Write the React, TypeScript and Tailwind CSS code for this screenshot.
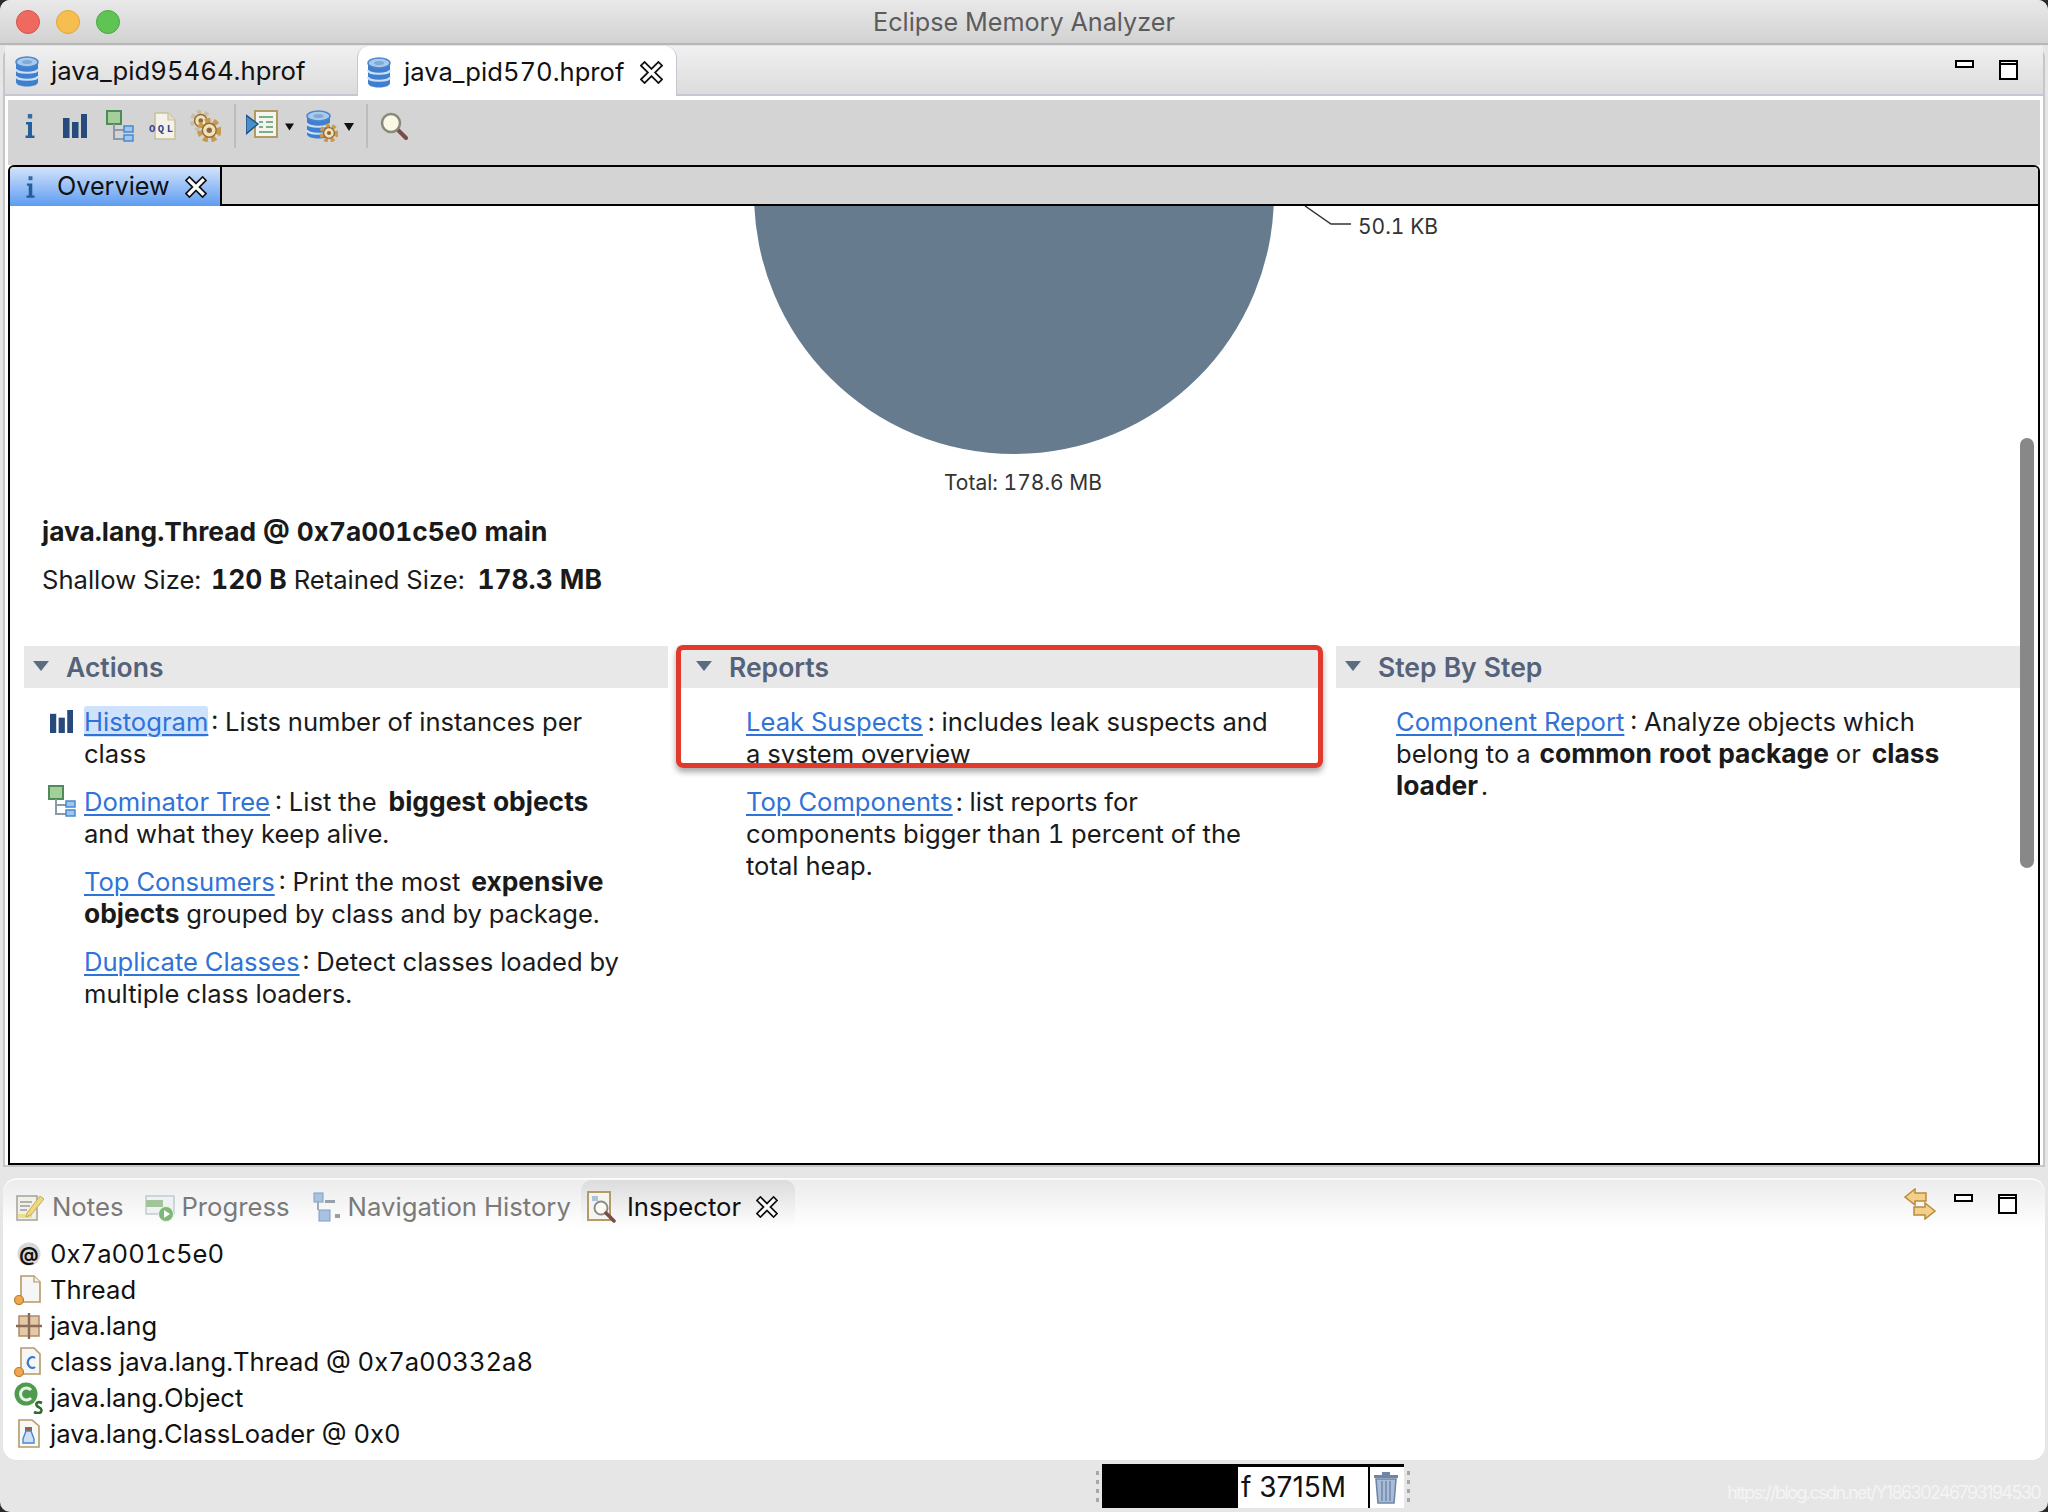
import { ReactNode } from "react";

const CloseIcon = ({ className = "" }: { className?: string }) => (
  <svg viewBox="0 0 20 20" className={className}>
    <path d="M4 4 L16 16 M16 4 L4 16" stroke="#111" strokeWidth="6" strokeLinecap="square" />
    <path d="M4 4 L16 16 M16 4 L4 16" stroke="#fff" strokeWidth="3" strokeLinecap="square" />
  </svg>
);

const DbIcon = ({ className = "" }: { className?: string }) => (
  <svg viewBox="0 0 26 32" className={className}>
    <path d="M2 6 V26 C2 32 24 32 24 26 V6 Z" fill="#3f7fd0" />
    <ellipse cx="13" cy="6" rx="11" ry="5" fill="#a9c9ea" stroke="#4a86cf" strokeWidth="1.5" />
    <ellipse cx="13" cy="6" rx="5" ry="2" fill="#7fa9d8" />
    <path d="M2 13 C2 18 24 18 24 13 M2 20 C2 25 24 25 24 20" fill="none" stroke="#cfe0f4" strokeWidth="2.2" />
  </svg>
);

const InfoIcon = ({ className = "" }: { className?: string }) => (
  <svg viewBox="0 0 10 24" className={className}>
    <rect x="2.8" y="0" width="4.4" height="4.5" fill="#2f6fa8" />
    <path d="M1 8 H7 V21.5 H9.5 V24 H0.5 V21.5 H3 V10.5 H1 Z" fill="#245f99" />
  </svg>
);

const BarsIcon = ({ className = "" }: { className?: string }) => (
  <svg viewBox="0 0 24 24" className={className}>
    <rect x="0" y="4" width="6.5" height="20" fill="#264a7c" />
    <rect x="9" y="8" width="6.5" height="16" fill="#264a7c" />
    <rect x="18" y="0" width="6" height="24" fill="#264a7c" />
  </svg>
);

const TreeIcon = ({ className = "" }: { className?: string }) => (
  <svg viewBox="0 0 28 32" className={className}>
    <rect x="1" y="1" width="14" height="13" fill="#a5cf9a" stroke="#4e8a5a" strokeWidth="2" />
    <path d="M8 14 V29 H18 M8 20 H18" fill="none" stroke="#8c99a8" strokeWidth="2" />
    <rect x="18" y="16" width="9" height="6" fill="#9cc8ee" stroke="#4a86cf" strokeWidth="1.5" />
    <rect x="18" y="25" width="9" height="6" fill="#9cc8ee" stroke="#4a86cf" strokeWidth="1.5" />
  </svg>
);

const OqlIcon = ({ className = "" }: { className?: string }) => (
  <svg viewBox="0 0 28 28" className={className}>
    <path d="M6 1 H19 L26 8 V27 H6 Z" fill="#f4f3ea" stroke="#c9c0a0" strokeWidth="1.6" />
    <path d="M19 1 V8 H26" fill="#e6dfc0" stroke="#c9c0a0" strokeWidth="1.2" />
    <text x="0" y="20" fontSize="10.5" fontWeight="700" fontFamily="'Liberation Mono', monospace" fill="#34408a" textLength="24">OQL</text>
  </svg>
);

const Gear = ({ cx, cy, r, fill = "#c99a4e" }: { cx: number; cy: number; r: number; fill?: string }) => (
  <g>
    <circle cx={cx} cy={cy} r={r} fill="none" stroke={fill} strokeWidth={r * 0.55} strokeDasharray={`${r * 0.5} ${r * 0.35}`} />
    <circle cx={cx} cy={cy} r={r * 0.72} fill="#f0e2bd" stroke="#9a6c2c" strokeWidth="1.4" />
    <circle cx={cx} cy={cy} r={r * 0.28} fill="#8a6a3c" />
  </g>
);

const GearsIcon = ({ className = "" }: { className?: string }) => (
  <svg viewBox="0 0 30 30" className={className}>
    <Gear cx={11} cy={10} r={8} fill="#c9bfa8" />
    <Gear cx={19} cy={19} r={9} />
  </svg>
);

const RunIcon = ({ className = "" }: { className?: string }) => (
  <svg viewBox="0 0 32 28" className={className}>
    <rect x="9" y="1" width="22" height="26" fill="#f3f5ee" stroke="#b09a66" strokeWidth="2" />
    <path d="M13 7 h14 M13 12 h4 m3 0 h7 M13 17 h4 m3 0 h7 M13 22 h14" stroke="#7cb08a" strokeWidth="2" />
    <path d="M0 5 L12 14 L0 24 Z" fill="#4a90c8" stroke="#1f4f86" strokeWidth="1.4" />
  </svg>
);

const DbGearIcon = ({ className = "" }: { className?: string }) => (
  <svg viewBox="0 0 32 32" className={className}>
    <path d="M1 6 V24 C1 30 24 30 24 24 V6 Z" fill="#3f7fd0" />
    <ellipse cx="12.5" cy="6" rx="11.5" ry="5" fill="#a9c9ea" stroke="#4a86cf" strokeWidth="1.5" />
    <ellipse cx="12.5" cy="6" rx="5" ry="2" fill="#7fa9d8" />
    <path d="M1 13 C1 18 24 18 24 13 M1 20 C1 25 24 25 24 20" fill="none" stroke="#cfe0f4" strokeWidth="2.2" />
    <Gear cx={23} cy={23} r={7.5} />
  </svg>
);

const SearchIcon = ({ className = "" }: { className?: string }) => (
  <svg viewBox="0 0 28 28" className={className}>
    <path d="M17 17 L26 26" stroke="#7d4a4a" strokeWidth="4" strokeLinecap="round" />
    <circle cx="11" cy="11" r="9" fill="#fbf8e6" stroke="#8a8a7a" strokeWidth="2.5" />
  </svg>
);

const Drop = ({ className = "" }: { className?: string }) => (
  <svg viewBox="0 0 10 8" className={className}>
    <path d="M0 0 H10 L5 8 Z" fill="#111" />
  </svg>
);

const MinMax = () => (
  <div className="flex items-start gap-[25px]">
    <div className="w-[19px] h-[8px] border-2 border-black bg-white" />
    <div className="w-[19px] h-[20px] border-2 border-black bg-white">
      <div className="h-[3px] border-b-2 border-black" />
    </div>
  </div>
);

const ToolSep = () => <div className="w-[2px] h-[44px] bg-[#bdbdbd]" />;

const NotesIcon = () => (
  <svg viewBox="0 0 28 28" className="w-[28px] h-[28px]">
    <rect x="1" y="3" width="20" height="24" fill="#f1f1ea" stroke="#a8a8a0" strokeWidth="1.6" />
    <path d="M4 9 h12 M4 13 h10 M4 17 h7" stroke="#9a9a9a" strokeWidth="1.6" />
    <rect x="2" y="21" width="14" height="4" fill="#eede90" />
    <path d="M11 20 L24 3 L28 6 L15 22 L10 24 Z" fill="#efd77c" stroke="#c2ad5c" strokeWidth="1" />
  </svg>
);

const ProgressIcon = () => (
  <svg viewBox="0 0 30 30" className="w-[30px] h-[30px]">
    <rect x="1" y="4" width="28" height="18" fill="#eef2f2" stroke="#b6c0c6" strokeWidth="1.2" />
    <rect x="1" y="8" width="17" height="7" fill="#a3c49b" />
    <circle cx="21" cy="22" r="7.5" fill="#7db77a" stroke="#e8f4e4" strokeWidth="1" />
    <path d="M19 18 L25 22 L19 26 Z" fill="#fff" />
  </svg>
);

const NavIcon = () => (
  <svg viewBox="0 0 28 30" className="w-[28px] h-[30px]">
    <rect x="1" y="1" width="9" height="9" fill="#a9c2e2" stroke="#7f9cc6" strokeWidth="1" />
    <rect x="12" y="8" width="10" height="3" fill="#9aa0a8" />
    <rect x="6" y="18" width="11" height="11" fill="#a9c2e2" stroke="#7f9cc6" strokeWidth="1" />
    <rect x="22" y="22" width="5" height="4" fill="#9aa0a8" />
    <path d="M5 10 V18" stroke="#a0a8b4" strokeWidth="2" />
  </svg>
);

const InspectorIcon = () => (
  <svg viewBox="0 0 30 32" className="w-[30px] h-[32px]">
    <rect x="1" y="1" width="22" height="28" fill="#f5f5f0" stroke="#b49a66" strokeWidth="2" />
    <rect x="5" y="5" width="6" height="5" fill="#a9c2e2" />
    <circle cx="14" cy="17" r="6.5" fill="#fbfbf2" stroke="#8a8a8a" strokeWidth="2" />
    <path d="M19 22 L27 30" stroke="#7d4a4a" strokeWidth="3.5" strokeLinecap="round" />
  </svg>
);

const OrangeDot = () => <circle cx="5" cy="21" r="4.5" fill="#f0a850" stroke="#c07a2a" strokeWidth="1.2" />;

const AtIcon = () => (
  <svg viewBox="0 0 24 26" className="w-[24px] h-[26px] ml-[3px]">
    <circle cx="12" cy="13" r="11.5" fill="#d8d8d8" />
    <text x="12" y="19.5" textAnchor="middle" fontSize="19" fontWeight="700" fontFamily="Inter, sans-serif" fill="#111">@</text>
  </svg>
);

const FileIcon = () => (
  <svg viewBox="0 0 28 30" className="w-[28px] h-[30px]">
    <path d="M7 1 H20 L26 7 V27 H7 Z" fill="#f6f6f6" stroke="#b49a66" strokeWidth="1.6" />
    <path d="M20 1 V7 H26" fill="#eee" stroke="#b49a66" strokeWidth="1.2" />
    <g transform="translate(0 4)"><OrangeDot /></g>
  </svg>
);

const PackageIcon = () => (
  <svg viewBox="0 0 26 26" className="w-[26px] h-[26px] ml-[2px]">
    <rect x="3" y="3" width="20" height="20" fill="#e4c8a8" stroke="#b08a68" strokeWidth="1.5" />
    <path d="M13 0 V26 M0 13 H26" stroke="#8a6a58" strokeWidth="2.4" />
  </svg>
);

const ClassFileIcon = () => (
  <svg viewBox="0 0 28 30" className="w-[28px] h-[30px]">
    <path d="M7 1 H20 L26 7 V27 H7 Z" fill="#f6f6f6" stroke="#b49a66" strokeWidth="1.6" />
    <path d="M21 11 A4.5 5.5 0 1 0 21 20" fill="none" stroke="#3f78c4" strokeWidth="2.2" />
    <g transform="translate(0 4)"><OrangeDot /></g>
  </svg>
);

const GreenClassIcon = () => (
  <svg viewBox="0 0 32 32" className="w-[32px] h-[32px]">
    <circle cx="12" cy="12" r="11.5" fill="#4f9a4e" />
    <path d="M17 8 A6 6 0 1 0 17 16" fill="none" stroke="#e8f4e4" strokeWidth="3" />
    <path d="M28 21 C24 19 21 21 23 24 C25 26 29 26 27 30 C25 32 22 31 20 30" fill="none" stroke="#2f6b2e" strokeWidth="2.6" />
  </svg>
);

const LoaderIcon = () => (
  <svg viewBox="0 0 24 30" className="w-[24px] h-[30px] ml-[3px]">
    <path d="M2 1 H15 L22 7 V28 H2 Z" fill="#f8f8f4" stroke="#b49a66" strokeWidth="1.6" />
    <rect x="8" y="8" width="7" height="4" fill="#a85a3a" />
    <path d="M9 12 H14 L17 20 V24 H6 V20 Z" fill="#cfe0f4" stroke="#4a86cf" strokeWidth="1.4" />
  </svg>
);

const TrashIcon = () => (
  <svg viewBox="0 0 24 32" className="w-[24px] h-[32px]">
    <rect x="8" y="0" width="8" height="3" fill="#6f86a8" />
    <rect x="0" y="3" width="24" height="3" fill="#6f86a8" />
    <path d="M2 7 H22 L20 31 H4 Z" fill="#a9bcd8" stroke="#6f86a8" strokeWidth="1.6" />
    <path d="M8 9 V29 M12 9 V29 M16 9 V29" stroke="#6f86a8" strokeWidth="1.4" />
  </svg>
);

const Grip = () => (
  <div className="flex flex-col gap-[5px]">
    <div className="w-[3px] h-[4px] bg-[#a8a8a8]" />
    <div className="w-[3px] h-[4px] bg-[#a8a8a8]" />
    <div className="w-[3px] h-[4px] bg-[#a8a8a8]" />
    <div className="w-[3px] h-[4px] bg-[#a8a8a8]" />
  </div>
);

const Link = ({ children }: { children: ReactNode }) => (
  <a className="text-[#2f72d8] underline underline-offset-[3px] decoration-[1.5px]">{children}</a>
);

const Strong = ({ children, className = "" }: { children: ReactNode; className?: string }) => (
  <b className={`text-[26.4px] leading-[0] font-bold ${className}`}>{children}</b>
);

const SectionHead = ({ title, indent }: { title: string; indent: string }) => (
  <div className={`h-[42px] bg-[#e8e8e8] flex items-center gap-[17px] ${indent}`}>
    <svg viewBox="0 0 16 10" className="w-[16px] h-[10px] -mt-[2px]">
      <path d="M0 0 H16 L8 10 Z" fill="#5a6b82" />
    </svg>
    <span className="text-[26.5px] font-semibold text-[#54627a] leading-none">{title}</span>
  </div>
);

const InspectorRow = ({ icon, text }: { icon: ReactNode; text: string }) => (
  <div className="h-[36px] flex items-center">
    <div className="w-[36px] ml-[11px] flex items-center">{icon}</div>
    <span>{text}</span>
  </div>
);

export default function App() {
  return (
    <div className="w-[2048px] h-[1512px] bg-[#2a2a2a] overflow-hidden font-['Inter',sans-serif] tabular-nums">
      <div className="h-full rounded-[10px] bg-[#e6e6e6] flex flex-col overflow-hidden">
        {/* Title bar */}
        <div className="h-[45px] shrink-0 flex items-center justify-center relative pt-[3px] border-b-2 border-[#b6b6b6] bg-gradient-to-b from-[#e9e9e9] to-[#d2d2d2]">
          <div className="absolute left-[16px] top-[10px] flex gap-[16px]">
            <div className="w-[24px] h-[24px] rounded-full bg-[#ee6a5f] border border-[#d9534a]" />
            <div className="w-[24px] h-[24px] rounded-full bg-[#f6bd4f] border border-[#dfa63a]" />
            <div className="w-[24px] h-[24px] rounded-full bg-[#5fc454] border border-[#4aa83f]" />
          </div>
          <span className="text-[25.2px] text-[#5c5c5c]">Eclipse Memory Analyzer</span>
        </div>

        {/* Editor area */}
        <div className="h-[1121px] shrink-0 mx-[3px] mt-[1px] flex flex-col rounded-t-[12px] border-x-2 border-b-2 border-[#c6c6c6] bg-white">
          <div className="h-[50px] shrink-0 flex items-end border-b-2 border-[#c5c6d4] bg-gradient-to-b from-[#f0f0f0] to-[#dcdcdc] relative">
            <div className="h-full w-[352px] flex items-center pl-[9px] pt-[3px] gap-[11px] text-[25.7px] text-[#111]">
              <DbIcon className="w-[26px] h-[32px]" />
              <span>java_pid95464.hprof</span>
            </div>
            <div className="h-[50px] w-[320px] -mb-[2px] flex items-center pl-[8px] pt-[3px] gap-[12px] text-[25.6px] text-[#111] bg-white rounded-t-[12px] border-x border-[#c5c6d4]">
              <DbIcon className="w-[26px] h-[32px]" />
              <span>java_pid570.hprof</span>
              <CloseIcon className="w-[23px] h-[23px] ml-[4px]" />
            </div>
            <div className="absolute right-[25px] top-[14px]">
              <MinMax />
            </div>
          </div>

          <div className="flex-1 flex flex-col pt-[4px] px-[3px] min-h-0">
            {/* Toolbar */}
            <div className="h-[65px] shrink-0 bg-[#d4d4d4] flex items-start pt-[10px] pl-[17px]">
              <InfoIcon className="w-[10px] h-[24px] mt-[4px]" />
              <BarsIcon className="w-[24px] h-[24px] ml-[28px] mt-[4px]" />
              <TreeIcon className="w-[28px] h-[32px] ml-[19px]" />
              <OqlIcon className="w-[28px] h-[28px] ml-[15px] mt-[2px]" />
              <GearsIcon className="w-[32px] h-[32px] ml-[12px]" />
              <div className="ml-[13px] -mt-[6px]"><ToolSep /></div>
              <RunIcon className="w-[32px] h-[28px] ml-[10px]" />
              <Drop className="w-[9px] h-[8px] ml-[7px] mt-[13px]" />
              <DbGearIcon className="w-[32px] h-[32px] ml-[12px]" />
              <Drop className="w-[10px] h-[8px] ml-[6px] mt-[13px]" />
              <div className="ml-[12px] -mt-[6px]"><ToolSep /></div>
              <SearchIcon className="w-[28px] h-[28px] ml-[12px] mt-[2px]" />
            </div>

            {/* Overview folder */}
            <div className="flex-1 flex flex-col border-2 border-black rounded-t-[6px] min-h-0 overflow-hidden">
              <div className="h-[39px] shrink-0 bg-[#d4d4d4] border-b-2 border-black flex">
                <div className="w-[212px] h-[39px] flex items-center pl-[16px] rounded-tl-[6px] border-r-2 border-black bg-gradient-to-b from-[#d3e3fb] to-[#5c9cf0] text-[25.2px] text-[#111]">
                  <InfoIcon className="w-[9px] h-[22px]" />
                  <span className="ml-[22px]">Overview</span>
                  <CloseIcon className="w-[22px] h-[22px] ml-[15px]" />
                </div>
              </div>

              <div className="flex-1 relative bg-white text-[#1a1a1a] min-h-0">
                {/* Pie chart */}
                <svg width="2029" height="264" className="block">
                  <circle cx="1004" cy="-12" r="260" fill="#667c8e" />
                  <path d="M1295 0 L1321 18 H1341" fill="none" stroke="#333" strokeWidth="1.5" />
                  <text x="1348" y="28" fontSize="21" fill="#333" fontFamily="Inter, sans-serif">50.1 KB</text>
                </svg>
                <div className="h-[26px] leading-[26px] text-[21px] text-[#333] text-center -ml-[2px]">Total: 178.6 MB</div>

                <div className="ml-[32px] mt-[20px] h-[32px] leading-[32px] text-[26.3px] font-bold">java.lang.Thread @ 0x7a001c5e0 main</div>
                <div className="ml-[32px] mt-[16px] h-[32px] leading-[32px] text-[25.6px]">
                  Shallow Size: <Strong className="ml-[3px]">120 B</Strong> Retained Size: <Strong className="ml-[6px]">178.3 MB</Strong>
                </div>

                {/* Sections */}
                <div className="mt-[50px] ml-[14px] flex text-[25.6px] leading-[32px] whitespace-nowrap">
                  <div className="w-[644px] shrink-0">
                    <SectionHead title="Actions" indent="pl-[9px]" />
                    <div className="pt-[18px] flex flex-col gap-[16px]">
                      <div className="flex">
                        <div className="w-[60px] shrink-0 pl-[26px] pt-[4px]">
                          <BarsIcon className="w-[23px] h-[23px]" />
                        </div>
                        <p className="h-[64px]">
                          <span className="bg-[#cfe2fb] rounded-[3px]"><Link>Histogram</Link></span><span className="ml-[3px]">:</span> Lists number of instances per
                          <br />class
                        </p>
                      </div>
                      <div className="flex">
                        <div className="w-[60px] shrink-0 pl-[24px] -mt-[1px]">
                          <TreeIcon className="w-[28px] h-[32px]" />
                        </div>
                        <p className="h-[64px]">
                          <Link>Dominator Tree</Link><span className="ml-[5px]">:</span> List the <Strong className="ml-[5px]">biggest objects</Strong>
                          <br />and what they keep alive.
                        </p>
                      </div>
                      <p className="pl-[60px] h-[64px]">
                        <Link>Top Consumers</Link><span className="ml-[4px]">:</span> Print the most <Strong className="ml-[4px]">expensive</Strong>
                        <br /><Strong>objects</Strong> grouped by class and by package.
                      </p>
                      <p className="pl-[60px] h-[64px]">
                        <Link>Duplicate Classes</Link><span className="ml-[3px]">:</span> Detect classes loaded by
                        <br />multiple class loaders.
                      </p>
                    </div>
                  </div>

                  <div className="w-[641px] shrink-0 ml-[9px]">
                    <SectionHead title="Reports" indent="pl-[19px]" />
                    <div className="pt-[18px] pl-[69px] flex flex-col gap-[16px]">
                      <p>
                        <Link>Leak Suspects</Link><span className="ml-[5px]">:</span> includes leak suspects and
                        <br />a system overview
                      </p>
                      <p>
                        <Link>Top Components</Link><span className="ml-[3px]">:</span> list reports for
                        <br />components bigger than 1 percent of the
                        <br />total heap.
                      </p>
                    </div>
                  </div>

                  <div className="w-[687px] shrink-0 ml-[18px]">
                    <SectionHead title="Step By Step" indent="pl-[9px]" />
                    <div className="pt-[18px] pl-[60px]">
                      <p>
                        <Link>Component Report</Link><span className="ml-[6px]">:</span> Analyze objects which
                        <br />belong to a <Strong className="ml-[2px]">common root package</Strong> or <Strong className="ml-[4px]">class</Strong>
                        <br /><Strong>loader</Strong><span className="ml-[3px]">.</span>
                      </p>
                    </div>
                  </div>
                </div>

                {/* Red annotation box */}
                <div className="absolute left-[666px] top-[439px] w-[647px] h-[123px] border-[5px] border-[#e2392d] rounded-[7px] shadow-[0_4px_6px_rgba(0,0,0,0.35)]" />

                {/* Scrollbar */}
                <div className="absolute left-[2010px] top-[232px] w-[14px] h-[430px] rounded-full bg-[#888888]" />
              </div>
            </div>
          </div>
        </div>

        {/* Bottom panel */}
        <div className="h-[282px] shrink-0 mx-[3px] mt-[11px] rounded-[14px] bg-white flex flex-col border-t-2 border-[#fafafa] overflow-hidden">
          <div className="h-[48px] shrink-0 flex items-center pt-[6px] bg-gradient-to-b from-[#ececec] to-white text-[25.7px] text-[#7a7a7a] relative">
            <div className="ml-[13px]"><NotesIcon /></div>
            <span className="ml-[8px]">Notes</span>
            <div className="ml-[22px]"><ProgressIcon /></div>
            <span className="ml-[6px]">Progress</span>
            <div className="ml-[23px]"><NavIcon /></div>
            <span className="ml-[7px]">Navigation History</span>
            <div className="h-[48px] -mt-[6px] pt-[6px] w-[214px] ml-[10px] flex items-center pl-[6px] rounded-t-[10px] bg-gradient-to-b from-[#dcdcdc] to-white text-[#111]">
              <InspectorIcon />
              <span className="ml-[10px]">Inspector</span>
              <CloseIcon className="w-[22px] h-[22px] ml-[15px]" />
            </div>
            <div className="absolute right-[28px] top-[14px] flex items-start">
              <svg viewBox="0 0 32 32" className="w-[32px] h-[32px] mr-[18px] -mt-[6px]">
                <path d="M1 9 L11 1 V5 H22 V13 H11 V17 Z M31 23 L21 15 V19 H10 V27 H21 V31 Z" fill="#f3d08a" stroke="#b98a3c" strokeWidth="1.5" />
              </svg>
              <MinMax />
            </div>
          </div>
          <div className="text-[25.6px] text-[#111] pt-[8px]">
            <InspectorRow icon={<AtIcon />} text="0x7a001c5e0" />
            <InspectorRow icon={<FileIcon />} text="Thread" />
            <InspectorRow icon={<PackageIcon />} text="java.lang" />
            <InspectorRow icon={<ClassFileIcon />} text="class java.lang.Thread @ 0x7a00332a8" />
            <InspectorRow icon={<GreenClassIcon />} text="java.lang.Object" />
            <InspectorRow icon={<LoaderIcon />} text="java.lang.ClassLoader @ 0x0" />
          </div>
        </div>

        {/* Status bar */}
        <div className="flex-1 flex items-center relative">
          <div className="ml-[1096px] flex items-center gap-[3px]">
            <Grip />
            <div className="w-[302px] h-[44px] bg-white border-t-[3px] border-black flex">
              <div className="w-[136px] bg-black" />
              <div className="w-[132px] border-r-2 border-black pl-[3px] text-[28px] leading-[40px] text-[#111] normal-nums">f 3715M</div>
              <div className="flex-1 flex items-center pl-[4px]"><TrashIcon /></div>
            </div>
            <Grip />
          </div>
          <span className="absolute right-[8px] bottom-[6px] text-[18px] tracking-[-1.6px] text-[#f4f4f4] normal-nums">https://blog.csdn.net/Y18630246793194530</span>
        </div>
      </div>
    </div>
  );
}
